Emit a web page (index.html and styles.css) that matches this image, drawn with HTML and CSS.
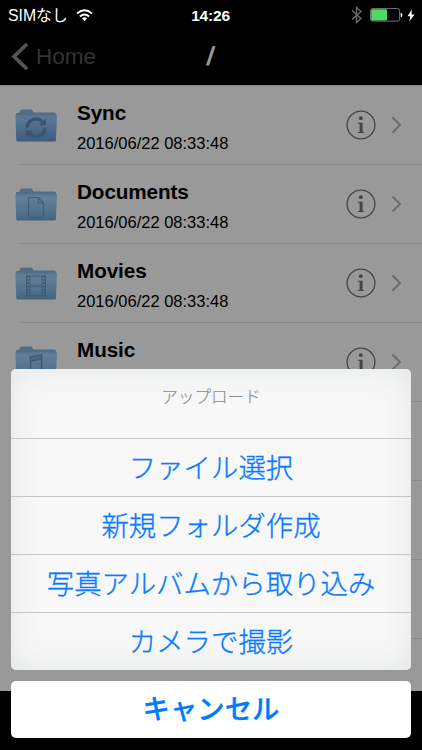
FILE: index.html
```html
<!DOCTYPE html>
<html lang="ja">
<head>
<meta charset="utf-8">
<title>Home</title>
<link rel="stylesheet" href="styles.css">
</head>
<body>
<svg width="0" height="0" class="defs">
  <defs>
    <linearGradient id="front" x1="0" y1="0" x2="0" y2="1"><stop offset="0" stop-color="#58748c"/><stop offset=".12" stop-color="#627f98"/><stop offset=".65" stop-color="#53728c"/><stop offset="1" stop-color="#43627c"/></linearGradient>
    <linearGradient id="sync" x1="0" y1="0" x2="0" y2="1"><stop offset="0" stop-color="#567090"/><stop offset=".12" stop-color="#5c7898"/><stop offset="1" stop-color="#3e5a7c"/></linearGradient>
    <g id="back"><path d="M1 8V5Q1 4 2.500 4H4L5.500 1Q6 .4 7 .4H15.500Q17 .4 17.500 1.600L18.500 3.600H38.500Q40.500 3.600 41 5V9H1Z" fill="#526c85"/></g>
    <path id="body" d="M.4 7.300Q0 5.700 1.700 5.700H40.700Q42.200 5.700 41.900 7.300L41 31Q40.900 32.600 39.300 32.600H3Q1.400 32.600 1.300 31Z"/>
    <g id="info" fill="none" stroke="#454545"><circle cx="15" cy="15" r="13.900" stroke-width="1.300"/><circle cx="14.800" cy="8.200" r="1.900" fill="#454545" stroke="none"/><path d="M12 12.700H16.600V21.900H18.200V23H11.800V21.900H13.600V13.800H12Z" fill="#454545" stroke="none"/></g>
    <path id="chev" d="M1.500 1.500 9 9 1.500 16.500" fill="none" stroke="#6d6d70" stroke-width="2.100"/>
  </defs>
</svg>
<div class="screen">
  <header class="status">
    <div class="carrier"><span>SIMなし</span>
      <svg width="17" height="13" viewBox="0 0 17 13" fill="none" stroke="#fff" stroke-width="2"><path d="M1 4.400Q8.500-1.900 16 4.400M3.900 7.500Q8.500 3.600 13.100 7.500"/><path d="M5.900 9.300Q8.500 7.200 11.100 9.300L8.500 12.200Z" fill="#fff" stroke="none"/></svg>
    </div>
    <div class="clock">14:26</div>
    <div class="power">
      <svg class="bt" width="12" height="18" viewBox="0 0 12 18" fill="none" stroke="#6f6f6f" stroke-width="1.300"><path d="M1 4.500 10 12.500 5.500 16.500V1.500L10 5.500 1 13.500"/></svg>
      <svg width="33" height="14" viewBox="0 0 33 14"><rect x=".6" y=".6" width="29" height="12.500" rx="1.800" fill="none" stroke="#777"/><rect x="1.200" y="1.200" width="15.800" height="11.300" rx="1" fill="#4cd964"/><path d="M30.700 4.700Q32.500 5 32.500 7T30.700 9.300Z" fill="#fff"/></svg>
      <svg class="bolt" width="8" height="13" viewBox="0 0 8 13"><path d="M4.800.5.500 7.300H3.300L2.300 12.500 7.500 5.400H4.600Z" fill="#fff"/></svg>
    </div>
  </header>
  <nav class="nav">
    <div class="back"><svg width="18" height="30" viewBox="0 0 18 30"><path d="M16 2 3 14.500 16 27" fill="none" stroke="#555" stroke-width="3.700"/></svg><span>Home</span></div>
    <h1>/</h1>
    <div></div>
  </nav>
  <main class="list">
    <div class="row">
      <svg class="folder" width="42" height="34" viewBox="0 0 42 34"><use href="#back"/><use href="#body" fill="url(#sync)"/><g fill="none" stroke="#3a5475" stroke-width="3.400"><path d="M12.200 18.500A8.800 8.800 0 0 1 27.500 13"/><path d="M29.800 18.500A8.800 8.800 0 0 1 14.500 24.500"/></g><path d="M24 16.300H31V9.500ZM18 21.500H11V28Z" fill="#3a5475"/></svg>
      <div class="text"><h2>Sync</h2><p>2016/06/22 08:33:48</p></div>
      <svg class="info" width="30" height="30"><use href="#info"/></svg><svg class="chev" width="11" height="18"><use href="#chev"/></svg>
    </div>
    <div class="row">
      <svg class="folder" width="42" height="34" viewBox="0 0 42 34"><use href="#back"/><use href="#body" fill="url(#front)"/><path d="M13.500 9.500H23.300L28.500 15V29.500H13.500ZM23.300 9.500V15H28.500" fill="none" stroke="#405d76" stroke-width="1.100"/></svg>
      <div class="text"><h2>Documents</h2><p>2016/06/22 08:33:48</p></div>
      <svg class="info" width="30" height="30"><use href="#info"/></svg><svg class="chev" width="11" height="18"><use href="#chev"/></svg>
    </div>
    <div class="row">
      <svg class="folder" width="42" height="34" viewBox="0 0 42 34"><use href="#back"/><use href="#body" fill="url(#front)"/><g fill="none" stroke="#3d5970" stroke-width="1"><path d="M11.500 9H30.500V29H11.500ZM15 9V29M27 9V29M15 19H27"/><path d="M13.200 9V29M28.800 9V29" stroke-width="2.700" stroke-dasharray="1.300 2"/></g></svg>
      <div class="text"><h2>Movies</h2><p>2016/06/22 08:33:48</p></div>
      <svg class="info" width="30" height="30"><use href="#info"/></svg><svg class="chev" width="11" height="18"><use href="#chev"/></svg>
    </div>
    <div class="row">
      <svg class="folder" width="42" height="34" viewBox="0 0 42 34"><use href="#back"/><use href="#body" fill="url(#front)"/><path d="M15.500 25V11L26.500 9V24M15.500 15 26.500 13" fill="none" stroke="#3d5970" stroke-width="1.500"/><path d="M16 11.500 26 9.500V12.500L16 14.500Z" fill="#4a6880"/></svg>
      <div class="text"><h2>Music</h2></div>
      <svg class="info" width="30" height="30"><use href="#info"/></svg><svg class="chev" width="11" height="18"><use href="#chev"/></svg>
    </div>
    <div class="row"></div>
    <div class="row"></div>
    <div class="row"></div>
  </main>
  <div class="overlay">
    <section class="sheet">
      <div class="title">アップロード</div>
      <div class="option">ファイル選択</div>
      <div class="option">新規フォルダ作成</div>
      <div class="option">写真アルバムから取り込み</div>
      <div class="option">カメラで撮影</div>
    </section>
    <div class="cancel">キャンセル</div>
  </div>
</div>
</body>
</html>
```
FILE: styles.css
```css
* { box-sizing: border-box; }
body, h1, h2, p { margin: 0; }
body { background: #000; font-family: "Liberation Sans", "Noto Sans CJK JP", sans-serif; }
.defs { position: absolute; }
.screen { position: relative; width: 422px; height: 750px; overflow: hidden; background: #000; }
.status { display: grid; grid-template-columns: 1fr auto 1fr; align-items: center; height: 28px; padding: 0 7px 0 8px; color: #fff; font-size: 15.800px; line-height: 28px; }
.carrier { display: flex; align-items: center; gap: 8px; }
.carrier span { padding-top: 1px; }
.clock { font-weight: bold; font-size: 15.500px; letter-spacing: -.2px; padding: 2px 2px 0 0; }
.power { display: flex; align-items: center; justify-content: flex-end; }
.bt { margin-right: 7px; }
.bolt { margin-left: 4px; }
.nav { display: grid; grid-template-columns: 1fr auto 1fr; align-items: center; height: 57px; }
.back { display: flex; align-items: center; gap: 7px; padding-left: 11px; color: #333; font-size: 22.500px; line-height: 30px; }
.nav h1 { color: #999; font-size: 26px; line-height: 30px; font-weight: bold; transform: translateY(-1px) skewX(-8deg); }
.list { height: 606px; overflow: hidden; background: #999; border-top: 1px solid #858585; }
.row { display: flex; align-items: flex-start; height: 79px; padding: 0 20px 0 15px; background: linear-gradient(#8a8a8c, #8a8a8c) 20px 78px / 402px 1px no-repeat; }
.folder { margin-top: 23px; flex: none; }
.text { flex: 1; margin: 13px 0 0 20px; color: #000; }
.text h2 { font-size: 20.700px; line-height: 28px; letter-spacing: -.1px; }
.text p { font-size: 16.500px; line-height: 20px; margin-top: 6px; }
.info { margin: 24px 15px 0 0; }
.chev { margin-top: 30px; }
.overlay { position: absolute; inset: 0; display: flex; flex-direction: column; justify-content: flex-end; gap: 11px; padding: 0 11px 12px; text-align: center; }
.sheet { height: 301px; border-radius: 5px; overflow: hidden; background: #f8f8f8; box-shadow: inset 0 0 32px #e2e4e6; }
.title { height: 69px; padding-top: 15px; line-height: 28px; color: #8f8f8f; font-size: 16.600px; font-weight: 300; -webkit-text-stroke: .15px #8f8f8f; }
.option { height: 58px; border-top: 1px solid #c3c5c8; line-height: 59px; color: #0a7aff; font-size: 27.400px; font-weight: 300; -webkit-text-stroke: .35px #0a7aff; }
.cancel { height: 57px; border-radius: 5px; background: #fff; color: #007aff; font-size: 27.400px; line-height: 58px; font-weight: 500; -webkit-text-stroke: .3px #007aff; }
```
